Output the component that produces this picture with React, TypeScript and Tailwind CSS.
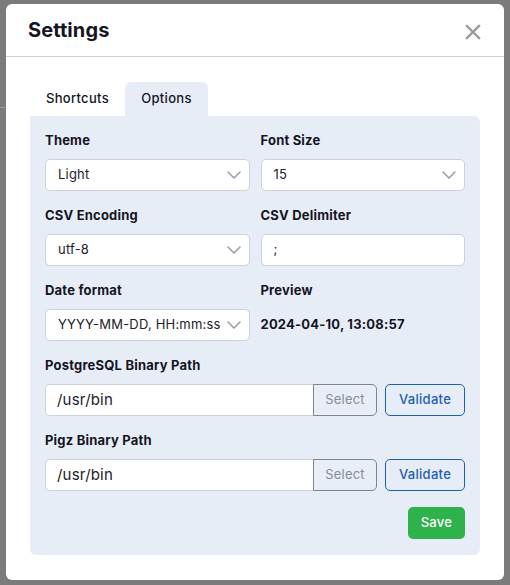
import React from "react";

const Chevron = () => (
  <svg width="14" height="8" viewBox="0 0 14 8" fill="none" className="shrink-0">
    <path d="M1 1l6 6 6-6" stroke="#9aa0a8" strokeWidth="1.6" strokeLinecap="round" strokeLinejoin="round" />
  </svg>
);

const Label = ({ children }: { children: React.ReactNode }) => (
  <div className="h-[18px] mb-[10px] text-[13px] leading-[18px] font-bold tracking-[0.2px] text-[#15151f]">{children}</div>
);

const SelectBox = ({ value }: { value: string }) => (
  <div className="h-[32px] bg-white border border-[#cdd1d9] rounded-[5px] flex items-center justify-between pl-[12px] pr-[8px] text-[13px] tracking-[0.2px] text-[#22222a]">
    <span>{value}</span>
    <Chevron />
  </div>
);

const PathRow = ({ label }: { label: string }) => (
  <div>
    <Label>{label}</Label>
    <div className="flex h-[32px]">
      <div className="flex-1 bg-white border border-[#cdd1d9] border-r-0 rounded-l-[5px] flex items-center pl-[11px] text-[15px] tracking-[0.2px] text-[#22222a]">
        /usr/bin
      </div>
      <div className="w-[64px] bg-[#e8edf6] border border-[#7c8594] rounded-r-[5px] flex items-center justify-center text-[13px] tracking-[0.2px] text-[#868c96]">
        Select
      </div>
      <div className="ml-[8px] w-[80px] bg-transparent border border-[#1f5fb0] rounded-[5px] flex items-center justify-center text-[13px] font-medium tracking-[0.3px] text-[#1f5fb0]">
        Validate
      </div>
    </div>
  </div>
);

export default function App() {
  return (
    <div
      className="w-[510px] h-[585px] bg-[#7b7b7b] relative overflow-hidden pt-[4px] pl-[6px]"
      style={{ fontFamily: "Inter, 'Noto Sans', sans-serif" }}
    >
      <div className="absolute left-0 top-[107px] w-[6px] h-px bg-[#9a9a9a]" />
      <div className="relative w-[498px] h-[576px] bg-white rounded-[6px] flex flex-col">
        <div className="h-[53px] border-b border-[#cfd2d8] flex items-center justify-between pl-[22px] pr-[23px]">
          <div className="text-[20px] font-bold text-[#15151f] tracking-[0.1px]">Settings</div>
          <svg width="16" height="16" viewBox="0 0 16 16" className="mt-[3px]">
            <path d="M2 2l12 12M14 2L2 14" stroke="#9b9b9b" strokeWidth="2.4" strokeLinecap="square" />
          </svg>
        </div>
        <div className="px-[24px] pt-[25px]">
          <div className="flex h-[34px]">
            <div className="w-[95px] flex items-center pl-[16px] text-[13px] font-medium tracking-[0.3px] text-[#15151f]">Shortcuts</div>
            <div className="w-[83px] bg-[#e7edf7] rounded-t-[6px] flex items-center justify-center text-[13px] font-medium tracking-[0.3px] text-[#15151f]">
              Options
            </div>
          </div>
          <div className="bg-[#e7edf7] rounded-b-[6px] rounded-tr-[6px] px-[15px] pt-[15px] pb-[16px] flex flex-col gap-[15px]">
            <div className="grid grid-cols-2 gap-x-[11px] gap-y-[15px]">
              <div>
                <Label>Theme</Label>
                <SelectBox value="Light" />
              </div>
              <div>
                <Label>Font Size</Label>
                <SelectBox value="15" />
              </div>
              <div>
                <Label>CSV Encoding</Label>
                <SelectBox value="utf-8" />
              </div>
              <div>
                <Label>CSV Delimiter</Label>
                <div className="h-[32px] bg-white border border-[#cdd1d9] rounded-[5px] flex items-center pl-[12px] text-[13px] text-[#22222a]">
                  ;
                </div>
              </div>
              <div>
                <Label>Date format</Label>
                <SelectBox value="YYYY-MM-DD, HH:mm:ss" />
              </div>
              <div>
                <Label>Preview</Label>
                <div className="h-[32px] flex items-center text-[13px] font-bold tracking-[0.2px] text-[#15151f]">
                  2024-04-10, 13:08:57
                </div>
              </div>
            </div>
            <PathRow label="PostgreSQL Binary Path" />
            <PathRow label="Pigz Binary Path" />
            <div className="flex justify-end mt-[1px]">
              <div className="w-[57px] h-[32px] bg-[#2eb24b] rounded-[5px] flex items-center justify-center text-[13px] font-medium tracking-[0.3px] text-white">
                Save
              </div>
            </div>
          </div>
        </div>
      </div>
    </div>
  );
}
